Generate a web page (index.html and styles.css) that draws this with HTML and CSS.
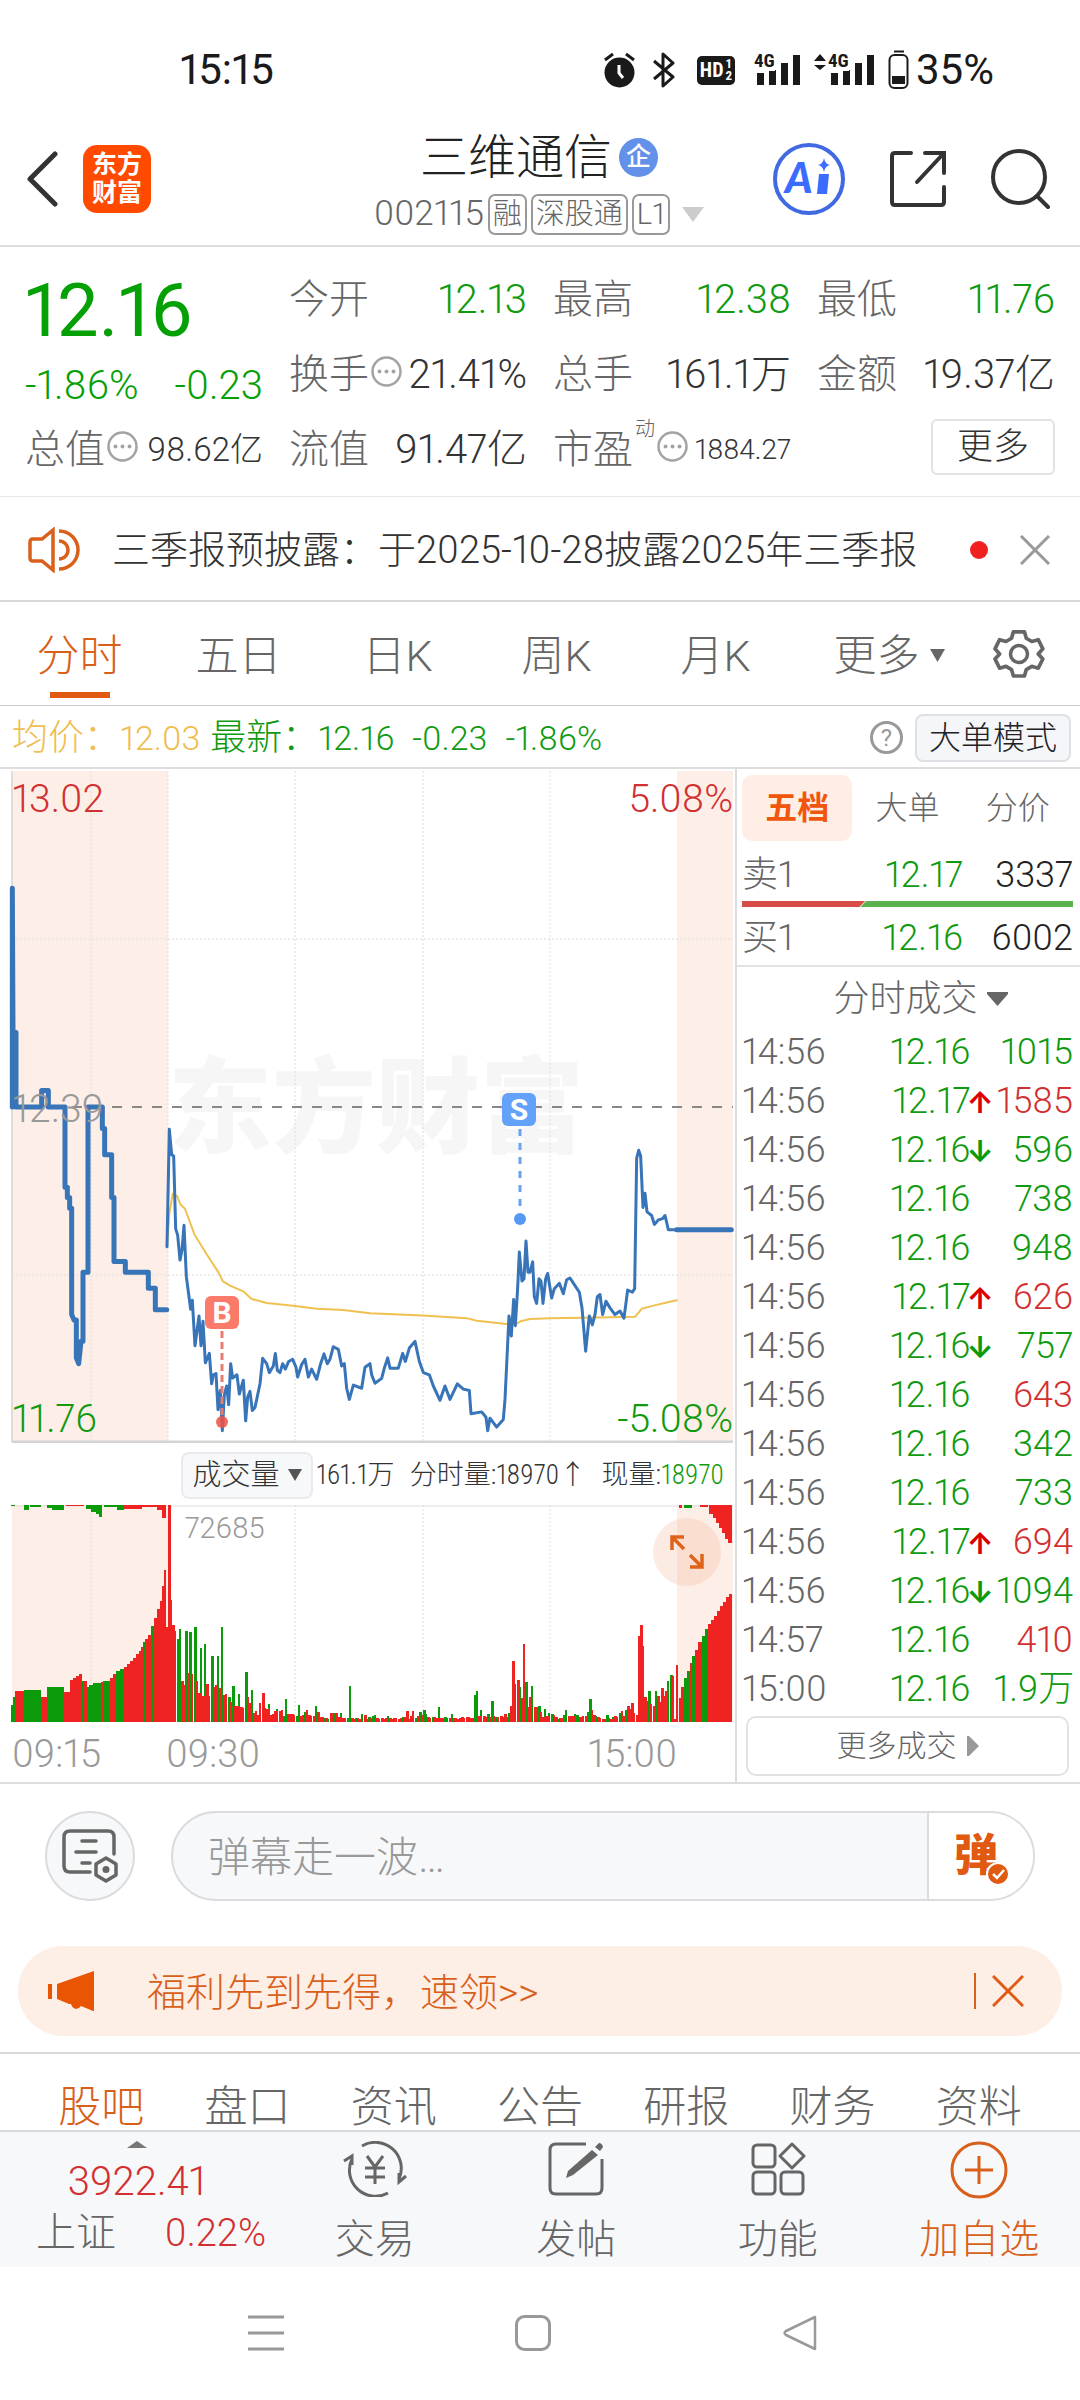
FILE: index.html
```html
<!DOCTYPE html>
<html lang="zh-CN">
<head>
<meta charset="utf-8">
<meta name="viewport" content="width=device-width">
<title>三维通信 002115</title>
<link rel="stylesheet" href="styles.css">
</head>
<body>
<div class="statusbar">
  <span class="clock">15:15</span>
  <div class="status-icons">
    <svg width="31" height="36" viewBox="0 0 31 36"><circle cx="15.500" cy="20.500" r="15" fill="#1a1a1a"/><path d="M1 8l8-6M30 8l-8-6" stroke="#1a1a1a" stroke-width="3"/><path d="M15 13v8l4 5" fill="none" stroke="#fff" stroke-width="3"/></svg>
    <svg class="bt" width="22" height="36" viewBox="0 0 22 36"><path d="M1 9l19 16-10 9V2l10 9L1 27" fill="none" stroke="#1a1a1a" stroke-width="3" stroke-linejoin="round"/></svg>
    <span class="hd">HD<span class="hd-n"><i>1</i><i>2</i></span></span>
    <span class="sig">
      <svg width="47" height="34" viewBox="0 0 47 34"><path d="M3 20h7v12H3zM15 17h7v15h-7zM27 10h7v22h-7zM39 2h7v30h-7z" fill="#1a1a1a"/></svg><b>4G</b>
    </span>
    <svg class="updown" width="12" height="34" viewBox="0 0 12 34"><path d="M0 8l6-7 6 7zM0 12h12l-6 5z" fill="#1a1a1a"/></svg>
    <span class="sig">
      <svg width="47" height="34" viewBox="0 0 47 34"><path d="M3 20h7v12H3zM15 17h7v15h-7zM27 10h7v22h-7zM39 2h7v30h-7z" fill="#1a1a1a"/></svg><b>4G</b>
    </span>
    <svg class="batt" width="22" height="40" viewBox="0 0 22 40"><path d="M6 1.500h10" stroke="#1a1a1a" stroke-width="2"/><rect x="1.500" y="5" width="18" height="33" rx="5" fill="none" stroke="#1a1a1a" stroke-width="2"/><path d="M4 26h13v8H4z" fill="#1a1a1a"/></svg>
    <span class="pct">35%</span>
  </div>
</div>

<header class="header">
  <div class="head-left">
    <button class="icon-btn" aria-label="返回"><svg width="32" height="56" viewBox="0 0 32 56"><path d="M28 3L3 28l25 25" fill="none" stroke="#333" stroke-width="5" stroke-linecap="round" stroke-linejoin="round"/></svg></button>
    <a href="#home" class="logo">东方<br>财富</a>
  </div>
  <div class="title">
    <h1>三维通信<span class="qi">企</span></h1>
    <button class="code-row"><span class="code">002115</span><span class="tag">融</span><span class="tag">深股通</span><span class="tag">L1</span><svg width="22" height="15" viewBox="0 0 22 15"><path d="M0 0h22L11 15z" fill="#ccc"/></svg></button>
  </div>
  <div class="head-right">
    <button class="icon-btn" aria-label="Ai"><svg width="72" height="72" viewBox="0 0 72 72"><circle cx="36" cy="36" r="34" fill="none" stroke="#4169e1" stroke-width="4"/><text x="12" y="50" class="ai">A</text><path d="M46 31h10l-2 20h-10z" fill="#3b6cff"/><path d="M51 15q1 6 6 7-5 1-6 7-1-6-6-7 5-1 6-7z" fill="#3b6cff"/></svg></button>
    <button class="icon-btn" aria-label="分享"><svg width="58" height="58" viewBox="0 0 58 58"><path d="M22 3H6q-3 0-3 3v46q0 3 3 3h46q3 0 3-3V37M36 3h19v20M55 3L28 32" fill="none" stroke="#333" stroke-width="4" stroke-linecap="round"/></svg></button>
    <button class="icon-btn" aria-label="搜索"><svg width="60" height="60" viewBox="0 0 60 60"><circle cx="28" cy="28" r="26" fill="none" stroke="#333" stroke-width="4"/><path d="M46 47l11 11" stroke="#333" stroke-width="4" stroke-linecap="round"/></svg></button>
  </div>
</header>

<section class="quote">
  <div class="last">
    <div class="price">12.16</div>
    <div class="chg"><span>-1.86%</span><span>-0.23</span></div>
  </div>
  <div class="cell"><span>今开</span><b class="g">12.13</b></div>
  <div class="cell"><span>最高</span><b class="g">12.38</b></div>
  <div class="cell"><span>最低</span><b class="g">11.76</b></div>
  <div class="cell"><span>换手<svg width="31" height="31" viewBox="0 0 31 31"><use href="#dots"/></svg></span><b>21.41%</b></div>
  <div class="cell"><span>总手</span><b>161.1万</b></div>
  <div class="cell"><span>金额</span><b>19.37亿</b></div>
  <div class="cell"><span>总值<svg width="31" height="31" viewBox="0 0 31 31"><g id="dots"><circle cx="15.500" cy="15.500" r="14" fill="none" stroke="#a3a3a3" stroke-width="2.500"/><g fill="#a3a3a3"><circle cx="8.500" cy="15.500" r="2"/><circle cx="15.500" cy="15.500" r="2"/><circle cx="22.500" cy="15.500" r="2"/></g></g></svg></span><b class="mid">98.62亿</b></div>
  <div class="cell"><span>流值</span><b>91.47亿</b></div>
  <div class="cell"><span>市盈<sup>动</sup><svg width="31" height="31" viewBox="0 0 31 31"><use href="#dots"/></svg></span><b class="small">1884.27</b></div>
  <div class="cell end"><button class="more-btn">更多</button></div>
</section>

<div class="news">
  <svg width="52" height="46" viewBox="0 0 52 46"><path d="M25 3L14 12H5q-3 0-3 3v16q0 3 3 3h9l11 9zM31 14a9 9 0 0 1 0 18M31 4a19 19 0 0 1 0 38" fill="none" stroke="#d9601a" stroke-width="3.500"/></svg>
  <a href="#news">三季报预披露：于2025-10-28披露2025年三季报</a>
  <i class="dot"></i>
  <button class="icon-btn" aria-label="关闭"><svg width="30" height="30" viewBox="0 0 30 30"><path d="M1 1l28 28M29 1L1 29" stroke="#999" stroke-width="3"/></svg></button>
</div>

<nav class="periods">
  <a href="#m" class="on">分时</a><a href="#5d">五日</a><a href="#dk">日K</a><a href="#wk">周K</a><a href="#mk">月K</a><a href="#more" class="drop">更多<svg width="15" height="13" viewBox="0 0 15 13"><path d="M0 0h15L7.500 13z" fill="#666"/></svg></a>
  <button class="icon-btn" aria-label="设置"><svg width="52" height="52" viewBox="0 0 52 52"><path d="M20 2h12l2 7 6 3.500 7-2 5 10-5 5.500 5 5.500-5 10-7-2-6 3.500-2 7H20l-2-7-6-3.500-7 2-5-10L5 26l-5-5.500 5-10 7 2L18 9z" transform="translate(2 2) scale(.92)" fill="none" stroke="#666" stroke-width="4" stroke-linejoin="round"/><circle cx="26" cy="26" r="8.500" fill="none" stroke="#666" stroke-width="3.500"/></svg></button>
</nav>

<div class="info">
  <span class="avg">均价：<em>12.03</em></span><span class="now">最新：<em>12.16</em><em>-0.23</em><em>-1.86%</em></span>
  <button class="help" aria-label="帮助">?</button>
  <button class="mode">大单模式</button>
</div>

<main class="board">
  <div class="charts">
    <svg class="chart" viewBox="0 0 735 674" role="img" aria-label="分时走势">
      <path d="M12 2h156v672H12zM677 2h56v672h-56z" fill="#fdeee7"/>
      <text x="168" y="376" class="mark">东方财富</text>
      <path d="M91 2v671M168 2v671M295 2v671M423 2v671M550 2v671M12 170h721M12 506h721" stroke="#ddd" stroke-width="1" stroke-dasharray="2 2"/>
      <path d="M12 2v671" stroke="#e0dcd9" stroke-width="2"/>
      <path d="M12 673h721" stroke="#d4d4d4" stroke-width="3"/>
      <path d="M12 338h721" stroke="#888" stroke-width="2" stroke-dasharray="10 10"/>
      <g class="plot" transform="translate(0 -8) scale(.33333 .44643)">
        <polyline class="avg-line" points="501,1085 508,1015 518,970 532,975 540,992 555,1003 583,1060 620,1105 655,1145 668,1165 690,1175 730,1188 755,1205 800,1214 886,1221 950,1227 1030,1230 1110,1237 1268,1242 1400,1248 1430,1254 1520,1261 1545,1262 1562,1255 1590,1250 1650,1248 1750,1247 1905,1245 1925,1227 1960,1220 2000,1213 2030,1208"/>
        <path class="pre" d="M37 775V285L39 608H48V775H125V738H145V775H195V955H202V978H209V1002H215V1240L222 1252H229V1337L236 1350L243 1300H249V1145H264V775H307V823H314V882H335V978H342V1121H376V1145H445V1181H466V1229H500M2030 1050H2194"/>
        <polyline class="line" points="501,1088 508,825 515,882 521,885 527,1048 533,1062 540,1118 546,1095 552,1040 559,1155 572,1228 577,1208 585,1310 597,1243 603,1310 609,1255 616,1348 628,1327 635,1395 640,1375 648,1372 654,1453 661,1410 667,1500 673,1420 680,1400 686,1442 692,1350 698,1382 711,1375 718,1418 730,1387 737,1478 743,1425 750,1412 757,1455 765,1448 780,1395 788,1338 800,1350 808,1370 820,1355 826,1327 832,1365 840,1370 848,1350 856,1362 866,1345 878,1340 888,1358 893,1380 905,1352 915,1340 925,1380 935,1362 950,1385 962,1350 972,1328 982,1350 990,1340 1000,1312 1015,1318 1025,1355 1033,1350 1040,1405 1048,1430 1060,1398 1085,1405 1095,1358 1110,1350 1115,1375 1125,1394 1145,1383 1153,1360 1163,1337 1170,1360 1195,1360 1208,1327 1216,1345 1228,1315 1245,1300 1258,1345 1270,1370 1288,1375 1300,1400 1320,1432 1335,1400 1350,1430 1372,1395 1390,1407 1408,1410 1413,1462 1445,1458 1458,1470 1463,1500 1470,1472 1490,1492 1510,1475 1515,1430 1527,1243 1534,1288 1541,1206 1546,1265 1553,1180 1558,1100 1566,1165 1572,1160 1578,1075 1584,1145 1590,1145 1598,1122 1603,1200 1610,1215 1617,1160 1623,1165 1629,1215 1637,1160 1643,1148 1655,1203 1663,1182 1678,1170 1690,1193 1700,1162 1710,1158 1725,1175 1738,1190 1746,1225 1757,1322 1768,1243 1777,1263 1785,1240 1792,1200 1800,1195 1808,1240 1818,1210 1830,1225 1845,1240 1860,1232 1872,1248 1883,1185 1897,1190 1904,1182 1910,890 1916,872 1922,885 1929,1000 1935,968 1941,1010 1955,1018 1963,1038 1975,1028 1988,1025 1995,1018 2005,1050 2030,1050"/>
      </g>
      <g class="flag"><path d="M222 562v84" stroke="#e87c70" stroke-width="3" stroke-dasharray="7 4"/><circle cx="222" cy="653" r="6" fill="#ef5045" opacity=".85"/><rect x="205" y="527" width="34" height="33" rx="6" fill="#fb7b6b"/><text x="222" y="554">B</text></g>
      <g class="flag"><path d="M520 360v84" stroke="#69a3ee" stroke-width="3" stroke-dasharray="7 7"/><circle cx="520" cy="450" r="6" fill="#5599f7"/><rect x="502" y="324" width="34" height="33" rx="6" fill="#64a1f8"/><text x="519" y="351">S</text></g>
      <text x="12" y="43" class="lbl up">13.02</text>
      <text x="733" y="43" class="lbl up r">5.08%</text>
      <text x="12" y="353" class="lbl base">12.39</text>
      <text x="12" y="663" class="lbl dn">11.76</text>
      <text x="733" y="663" class="lbl dn r">-5.08%</text>
    </svg>
    <div class="vol-head">
      <button class="vol-btn">成交量<svg width="14" height="12" viewBox="0 0 14 12"><path d="M0 0h14L7 12z" fill="#555"/></svg></button>
      <span>161.1万</span><span>分时量:18970↑</span><span>现量:<b>18970</b></span>
    </div>
    <div class="vol-wrap">
      <svg class="chart" viewBox="0 0 735 217" role="img" aria-label="成交量">
        <path d="M12 0h156v217H12zM677 0h56v217h-56z" fill="#fdeee7"/>
        <path d="M91 0v217M295 0v217M423 0v217M550 0v217" stroke="#ddd" stroke-width="1" stroke-dasharray="2 2"/>
        <path d="M11 1h722" stroke="#ddd" stroke-width="1"/>
        <path id="volDown" fill="#0a9a0a"/><path id="volUp" fill="#ef2422"/>
        <text x="185" y="33" class="vmax">72685</text>
      </svg>
      <button class="expand" aria-label="全屏"><svg width="34" height="34" viewBox="0 0 34 34"><path d="M14 2H2v13M3 3l11 11M20 20l11 11M20 32h12V19" fill="none" stroke="#e0631a" stroke-width="3.500"/></svg></button>
    </div>
    <div class="axis"><span>09:15</span><span>09:30</span><span class="close">15:00</span></div>
  </div>

  <aside class="orders">
    <nav class="otabs"><button class="on">五档</button><button>大单</button><button>分价</button></nav>
    <div class="book"><span>卖1</span><b class="g">12.17</b><b>3337</b></div>
    <svg class="ratio" viewBox="0 0 333 6" preserveAspectRatio="none"><path d="M0 0h124l-6 6H0z" fill="#d84c47"/><path d="M125 0h208v6H119z" fill="#5cb24d"/></svg>
    <div class="book buy"><span>买1</span><b class="g">12.16</b><b>6002</b></div>
    <button class="deal-head">分时成交<svg width="21" height="14" viewBox="0 0 21 14"><path d="M0 0h21v2L10.500 14 0 2z" fill="#666"/></svg></button>
    <table class="deals"><tbody>
      <tr><td>14:56</td><td>12.16</td><td></td><td>1015</td></tr>
      <tr><td>14:56</td><td>12.17</td><td class="a-up"></td><td class="up">1585</td></tr>
      <tr><td>14:56</td><td>12.16</td><td class="a-dn"></td><td>596</td></tr>
      <tr><td>14:56</td><td>12.16</td><td></td><td>738</td></tr>
      <tr><td>14:56</td><td>12.16</td><td></td><td>948</td></tr>
      <tr><td>14:56</td><td>12.17</td><td class="a-up"></td><td class="up">626</td></tr>
      <tr><td>14:56</td><td>12.16</td><td class="a-dn"></td><td>757</td></tr>
      <tr><td>14:56</td><td>12.16</td><td></td><td class="up">643</td></tr>
      <tr><td>14:56</td><td>12.16</td><td></td><td>342</td></tr>
      <tr><td>14:56</td><td>12.16</td><td></td><td>733</td></tr>
      <tr><td>14:56</td><td>12.17</td><td class="a-up"></td><td class="up">694</td></tr>
      <tr><td>14:56</td><td>12.16</td><td class="a-dn"></td><td>1094</td></tr>
      <tr><td>14:57</td><td>12.16</td><td></td><td class="up">410</td></tr>
      <tr><td>15:00</td><td>12.16</td><td></td><td>1.9万</td></tr>
    </tbody></table>
    <button class="more-deals">更多成交<svg width="12" height="20" viewBox="0 0 12 20"><path d="M0 0h2l10 10L2 20H0z" fill="#999"/></svg></button>
  </aside>
</main>

<div class="barrage">
  <button class="round" aria-label="弹幕设置"><svg width="58" height="58" viewBox="0 0 58 58"><path d="M53 27V10q0-6-6-6H9q-6 0-6 6v29q0 6 6 6h20M21 14h14M15 25h20M21 36h8" fill="none" stroke="#666" stroke-width="3.500" stroke-linecap="round"/><path d="M45 31l10 6v11l-10 6-10-6V37z" fill="none" stroke="#666" stroke-width="3.500" stroke-linejoin="round"/><circle cx="45" cy="42.500" r="3.500" fill="#666"/></svg></button>
  <div class="field">
    <input type="text" placeholder="弹幕走一波…" aria-label="弹幕">
    <button aria-label="弹幕开关"><span>弹</span><svg width="24" height="24" viewBox="0 0 24 24"><circle cx="12" cy="12" r="11" fill="#e05a12" stroke="#fff" stroke-width="2"/><path d="M7 12l4 4 7-8" fill="none" stroke="#fff" stroke-width="2.500"/></svg></button>
  </div>
</div>

<div class="banner">
  <svg width="46" height="40" viewBox="0 0 46 40"><path d="M0 13h4v15H0zM9 13l37-13v40H45l-12-5q-2 3-5 3-4-1-5-5h-2l-12-5z" fill="#ea5504"/></svg>
  <a href="#welfare">福利先到先得，速领&gt;&gt;</a>
  <i></i>
  <button class="icon-btn" aria-label="关闭"><svg width="32" height="32" viewBox="0 0 32 32"><path d="M1 1l30 30M31 1L1 31" stroke="#e05a12" stroke-width="3"/></svg></button>
</div>

<nav class="sections"><a href="#guba" class="on">股吧</a><a href="#pan">盘口</a><a href="#zixun">资讯</a><a href="#gonggao">公告</a><a href="#yanbao">研报</a><a href="#caiwu">财务</a><a href="#ziliao">资料</a></nav>

<footer class="toolbar">
  <a href="#index" class="index"><svg width="20" height="7" viewBox="0 0 20 7"><path d="M10 0l10 7H0z" fill="#777"/></svg><strong>3922.41</strong><span>上证<em>0.22%</em></span></a>
  <a href="#trade"><svg width="64" height="56" viewBox="0 0 64 56"><path d="M19 5A26 26 0 0 1 56 38M45 52A26 26 0 0 1 9 18M1 20L9 15v9M63 35l-7 6v-9M24 15l8 11 8-11M22 27h20M22 36h20M32 26v17" fill="none" stroke="#666" stroke-width="3"/></svg>交易</a>
  <a href="#post"><svg width="56" height="56" viewBox="0 0 56 56"><path d="M38 3H8q-6 0-6 6v38q0 6 6 6h40q6 0 6-6V18" fill="none" stroke="#666" stroke-width="3"/><path d="M44 9l6 5-25 20-7 3 2-7zM47 6l4-4q3 0 4 4l-3 4z" fill="#666"/></svg>发帖</a>
  <a href="#func"><svg width="56" height="56" viewBox="0 0 56 56"><g fill="none" stroke="#666" stroke-width="3"><rect x="3" y="4" width="22" height="22" rx="4"/><rect x="3" y="31" width="22" height="22" rx="4"/><rect x="31" y="31" width="22" height="22" rx="4"/><path d="M42 3l12 12-12 12-12-12z" stroke-linejoin="round"/></g></svg>功能</a>
  <a href="#add" class="on"><svg width="58" height="58" viewBox="0 0 58 58"><circle cx="29" cy="29" r="27" fill="none" stroke="#d9601a" stroke-width="3"/><path d="M29 15v28M15 29h28" stroke="#d9601a" stroke-width="3"/></svg>加自选</a>
</footer>

<div class="sysnav">
  <svg width="36" height="36" viewBox="0 0 36 36"><path d="M0 2h36M0 18h36M0 34h36" stroke="#999" stroke-width="3"/></svg>
  <svg width="36" height="36" viewBox="0 0 36 36"><rect x="1.500" y="1.500" width="33" height="33" rx="8" fill="none" stroke="#999" stroke-width="3"/></svg>
  <svg width="36" height="36" viewBox="0 0 36 36"><path d="M33 2v32L4 20q-3-2 0-4z" fill="none" stroke="#999" stroke-width="2.500" stroke-linejoin="round"/></svg>
</div>
<script src="chart.js"></script>
</body>
</html>
```
FILE: styles.css
```css
* { box-sizing: border-box; }
body {
  margin: 0;
  background: #fff;
  color: #333;
  font-family: Roboto, "Noto Sans CJK SC", sans-serif;
  font-size: 40px;
  font-weight: 300;
  line-height: 50px;
  font-variant-numeric: proportional-nums;
}
button, input { font: inherit; color: inherit; background: none; border: 0; padding: 0; margin: 0; font-variant-numeric: inherit; }
a { color: inherit; text-decoration: none; }
b, strong, h1 { font-weight: inherit; margin: 0; }
em, i { font-style: normal; }
svg { display: block; flex: none; }
.g { color: #109a10; }
.icon-btn { display: block; flex: none; }

.statusbar { display: flex; justify-content: space-between; align-items: center; height: 96px; padding: 44px 86px 0 180px; color: #1a1a1a; }
.clock { font-size: 42px; font-weight: 400; }
.status-icons { display: flex; align-items: center; }
.bt { margin: 0 22px 0 18px; }
.hd { display: flex; align-items: center; height: 29px; padding: 0 3px; margin-right: 19px; border-radius: 5px; background: #1a1a1a; color: #fff; font: 700 20px/29px "Roboto Condensed", Roboto, sans-serif; }
.hd-n { font-size: 13px; line-height: 12px; margin-left: 2px; }
.hd-n i { display: block; }
.sig { position: relative; margin-right: 13px; }
.updown { margin-right: 2px; }
.batt { margin-right: 6px; }
.sig b { position: absolute; left: 0; top: -2px; font: 700 19px/20px "Roboto Condensed", Roboto, sans-serif; background: #fff; }
.pct { font-size: 42px; font-weight: 400; }

.header { display: grid; grid-template-columns: 1fr auto 1fr; align-items: center; height: 151px; padding: 16px 29px 0 27px; border-bottom: 2px solid #ddd; }
.head-left, .head-right { display: flex; align-items: center; }
.head-left { gap: 24px; }
.head-right { justify-content: flex-end; gap: 44px; }
.logo { display: block; width: 68px; height: 68px; padding-top: 6px; border-radius: 14px; background: #ff4a00; color: #fff; font-size: 25px; font-weight: 700; line-height: 28px; text-align: center; }
.title { display: flex; flex-direction: column; align-items: center; gap: 8px; padding-top: 7px; }
.title h1 { display: flex; align-items: center; gap: 7px; font-size: 48px; line-height: 56px; color: #222; }
.qi { width: 39px; height: 39px; border-radius: 50%; background: #6390e8; color: #fff; font-size: 25px; font-weight: 500; line-height: 38px; text-align: center; }
.code-row { display: flex; align-items: center; gap: 4px; height: 41px; color: #666; }
.code { font-size: 35px; }
.tag { height: 41px; padding: 0 3px; border: 2px solid #999; border-radius: 7px; font-size: 29px; line-height: 37px; }
.code-row svg { margin-left: 8px; }
.ai { font: italic 900 42px Lato, sans-serif; fill: #3b6cff; }

.quote { display: grid; grid-template-columns: repeat(4, 1fr); grid-auto-rows: 75px; column-gap: 26px; height: 250px; padding: 15px 25px 0; border-bottom: 1px solid #e8e8e8; }
.last { grid-row: span 2; color: #05a005; }
.price { font-size: 74px; font-weight: 400; line-height: 98px; }
.chg { display: flex; justify-content: space-between; line-height: 52px; }
.cell { display: flex; justify-content: space-between; align-items: center; white-space: nowrap; }
.cell > span { display: flex; align-items: center; gap: 2px; color: #666; }
.cell svg { margin-bottom: 6px; }
.cell sup { font-size: 20px; line-height: 24px; align-self: flex-start; margin-top: -8px; }
.cell .mid { font-size: 33px; }
.cell .small { font-size: 28px; }
.cell.end { justify-content: flex-end; }
.more-btn { width: 124px; height: 56px; margin-bottom: 6px; border: 2px solid #e2e2e2; border-radius: 6px; font-size: 36px; }

.news { display: flex; align-items: center; height: 105px; padding: 2px 30px 0 28px; border-bottom: 2px solid #d8d8d8; }
.news a { flex: 1; padding-left: 32px; font-size: 38px; white-space: nowrap; }
.dot { width: 18px; height: 18px; margin-right: 32px; border-radius: 50%; background: #f02020; }

.periods { display: grid; grid-template-columns: repeat(5, 159px) 1fr auto; align-items: center; height: 104px; padding-right: 35px; border-bottom: 1px solid #ccc; color: #666; font-size: 43px; }
.periods a { display: flex; justify-content: center; align-items: center; gap: 10px; height: 103px; padding-top: 4px; }
.periods .drop { padding-right: 10px; }
.periods .on { color: #d9601a; background: linear-gradient(#e05a12, #e05a12) 50% 90px / 60px 6px no-repeat; }

.info { display: flex; align-items: center; height: 63px; padding: 2px 9px 0 12px; border-bottom: 2px solid #ddd; font-size: 36px; white-space: nowrap; }
.avg { color: #f0bd50; }
.info em { font-size: 34px; }
.now { flex: 1; display: flex; gap: 18px; padding-left: 10px; color: #109a10; }
.now em:first-child { margin-left: -18px; }
.help { width: 33px; height: 33px; margin-right: 12px; border: 3px solid #999; border-radius: 50%; color: #999; font-size: 24px; font-weight: 400; line-height: 26px; }
.mode { width: 156px; height: 48px; border: 2px solid #dde0e4; border-radius: 8px; background: #f5f6f9; color: #222; font-size: 32px; line-height: 44px; }

.board { display: grid; grid-template-columns: 735fr 345fr; border-bottom: 2px solid #ddd; }
.charts { min-width: 0; }
.chart { width: 100%; height: auto; }
.mark { font: 900 104px "Noto Sans CJK SC", sans-serif; fill: #f6f6f6; }
.plot polyline, .plot path { fill: none; vector-effect: non-scaling-stroke; stroke-linejoin: round; stroke-linecap: round; }
.plot .avg-line { stroke: #f0c050; stroke-width: 2; }
.plot .pre { stroke: #3774b8; stroke-width: 5; }
.plot .line { stroke: #3774b8; stroke-width: 3; }
.lbl { font-size: 39px; }
.lbl.r { text-anchor: end; }
.lbl.up { fill: #d23030; }
.lbl.dn { fill: #109a10; }
.lbl.base { fill: #999; }
.flag text { font: 700 30px Roboto, sans-serif; fill: #fff; text-anchor: middle; }
.vol-head { display: flex; align-items: center; justify-content: space-between; height: 62px; padding: 2px 11px 0 181px; font-family: "Roboto Condensed", "Noto Sans CJK SC", sans-serif; font-size: 27px; white-space: nowrap; }
.vol-head b { color: #109a10; }
.vol-btn { display: flex; align-items: center; justify-content: center; gap: 8px; width: 132px; height: 47px; margin-right: -12px; border: 2px solid #e8eaee; border-radius: 8px; background: #f7f8fa; font-size: 29px; }
.vol-wrap { position: relative; }
.vmax { font-size: 29px; fill: #999; }
.expand { position: absolute; right: 14px; top: 13px; width: 68px; height: 68px; padding: 17px; border-radius: 50%; background: rgba(246, 190, 160, .3); }
.axis { display: flex; height: 60px; padding: 7px 58px 0 12px; color: #999; font-size: 38px; }
.axis span { width: 154px; }
.axis .close { margin-left: auto; width: auto; }

.orders { display: flex; flex-direction: column; padding: 6px 7px 6px 5px; border-left: 2px solid #ddd; font-size: 36px; }
.otabs { display: grid; grid-template-columns: repeat(3, 1fr); color: #666; font-size: 32px; line-height: 66px; }
.otabs .on { border-radius: 10px; background: #feeee6; color: #f0570c; font-weight: 700; }
.book { display: grid; grid-template-columns: 1fr auto 110px; align-items: center; height: 60px; padding-top: 8px; color: #666; }
.book b:last-child { color: #222; text-align: right; }
.book.buy { margin: 0 -7px 0 -5px; padding: 4px 7px 0 5px; border-bottom: 2px solid #e2e2e2; }
.ratio { width: 100%; height: 6px; }
.deal-head { display: flex; align-items: center; justify-content: center; gap: 9px; height: 61px; padding: 2px 0 0 26px; color: #666; }
.deals { flex: 1; width: 100%; border-collapse: collapse; color: #109a10; table-layout: fixed; }
.deals td { height: 49px; padding: 0; line-height: 49px; text-align: right; white-space: nowrap; }
.deals td:first-child { width: 26%; text-align: left; color: #666; }
.deals td:nth-child(2) { width: 43%; }
.deals td:nth-child(3) { width: 7%; }
.deals .up { color: #d23030; }
.a-up::before, .a-dn::before { content: "↑"; display: block; color: #d00; font: 700 30px/44px Inter, sans-serif; text-indent: -4px; text-align: left; }
.a-dn::before { content: "↓"; color: #0a9a0a; }
.more-deals { display: flex; align-items: center; justify-content: center; gap: 10px; height: 60px; margin: 2px 4px 0; border: 2px solid #e2e2e2; border-radius: 10px; color: #666; font-size: 30px; }

.barrage { display: flex; gap: 36px; padding: 27px 45px 0; }
.round { display: flex; align-items: center; justify-content: center; width: 90px; height: 90px; border: 2px solid #dadcdf; border-radius: 50%; background: #f7f8fa; }
.field { flex: 1; display: flex; height: 90px; border: 2px solid #dadcdf; border-radius: 45px; overflow: hidden; background: #f7f8fa; }
.field input { flex: 1; min-width: 0; padding: 4px 0 0 35px; font-size: 42px; }
.field input::placeholder { color: #999; opacity: 1; }
.field button { position: relative; width: 106px; border-left: 2px solid #dadcdf; background: #fff; color: #e05a12; font-size: 44px; font-weight: 900; text-align: left; padding-left: 25px; }
.field button svg { position: absolute; left: 57px; top: 49px; }

.banner { display: flex; align-items: center; height: 90px; margin: 45px 18px 16px; padding: 0 38px 0 30px; border-radius: 45px; background: #fdeee6; color: #d9601a; }
.banner a { flex: 1; padding: 3px 0 0 53px; font-size: 39px; }
.banner i { width: 2px; height: 36px; margin-right: 16px; background: #d9601a; }

.sections { display: grid; grid-template-columns: repeat(7, 1fr); height: 80px; padding: 28px 28px 0; border-top: 2px solid #d8d8d8; border-bottom: 2px solid #d8dadd; color: #666; font-size: 43px; text-align: center; }
.sections .on { color: #d9601a; }

.toolbar { display: grid; grid-template-columns: 274px repeat(4, 1fr); height: 135px; background: #f7f8fa; color: #666; }
.toolbar a { display: flex; flex-direction: column; align-items: center; justify-content: space-between; padding: 9px 0 2px; line-height: 50px; }
.toolbar .on { color: #d9601a; }
.toolbar .index { justify-content: flex-start; padding-bottom: 0; }
.toolbar strong { color: #d23030; line-height: 68px; }
.index span { display: flex; justify-content: space-between; width: 230px; margin-left: 28px; line-height: 34px; }
.index em { color: #d23030; font-size: 38px; }

.sysnav { display: flex; align-items: center; justify-content: space-between; height: 132px; padding: 0 262px 0 248px; }
```
FILE: chart.js
```js
// One bar per minute from 09:30: height in px, "g" marks a falling minute.
const minutes = ("217 122g 97 91g 83g 93g 41 37 91g 49 90g 48 95g 41 29 74g 26 78g 38 26 66g 35 37 66g 34 95g 27 28 25g 20 36g 16 16 28g 15 14 50g 25 19 32g " +
  "9 11 7 19 29 14g 13 18g 7 8 11 13g 11 12 6g 23g 8 8 8 7 6g 17g 6 7 10g 12 7 6 6 16g 10 5 5 4g 4 3g 9 9 9g 9 5 9g 4 4 4g 36g 4 3 4g 4 " +
  "3 8g 7 3 5g 4 6g 7g 4 3 4 3 4 6g 4 3 4 4 3 4 5g 5 11 3 6 11 4g 6 10g 7 12g 8g 5 4 5g 5 4 15g 4 4 5g 4g 4 8g 4 4 " +
  "3 4 5 4 5 5g 4 4 27g 31g 6 12g 6 5 8g 5 21g 6 5g 5 6 5 8 5 9g 16 61 38g 42 35g 24 78 40g 15 25 36g 15 15 16g 10 " +
  "5 13g 6 9g 8g 7 5 3g 4 4 7g 12g 6 6 6 8g 7g 5g 5 6 6 10g 23g 12 7 6g 5 4 3 3 7g 4g 3 5g 6 5 9g 11 6 12g 16 13 19 9 " +
  "7 86 97 76g 25 21g 31g 18 16 31g 26 20 34 26 31 41g 47g 46 3").split(" ");

// Call auctions: x from, x to, height, falling.
const pre = [
  [11, 13, 17, 1], [13, 15, 25, 1], [15, 24, 31, 0], [24, 41, 32, 1], [41, 47, 25, 0], [47, 64, 35, 1], [64, 70, 30, 0],
  [70, 73, 42, 0], [73, 76, 44, 0], [76, 79, 46, 0], [79, 82, 48, 0], [82, 84, 41, 1], [84, 87, 41, 0], [87, 89, 35, 1], [89, 93, 37, 1],
  [93, 101, 39, 1], [101, 103, 40, 0], [103, 110, 41, 1], [110, 113, 44, 0], [113, 116, 48, 0], [116, 120, 51, 1], [120, 124, 53, 1],
  [124, 127, 55, 0], [127, 130, 58, 0], [130, 133, 61, 0], [133, 136, 64, 0], [136, 139, 68, 0], [139, 141, 71, 0],
  [141, 143, 75, 0], [143, 145, 80, 1], [145, 148, 83, 0], [148, 151, 87, 0], [151, 154, 96, 1], [154, 157, 104, 0],
  [157, 160, 113, 0], [160, 162, 121, 0], [162, 164, 136, 0], [164, 166, 152, 0], [166, 168, 95, 0],
  [676, 678, 57, 0], [679, 681, 24, 0], [681, 684, 35, 0], [684, 687, 44, 1], [687, 690, 51, 1], [690, 692, 59, 0], [692, 695, 66, 1],
  [695, 698, 72, 0], [698, 702, 80, 0], [702, 705, 86, 1], [705, 708, 93, 1], [708, 711, 98, 0], [711, 714, 102, 0],
  [714, 717, 106, 0], [717, 720, 111, 0], [720, 723, 116, 0], [723, 726, 120, 0], [726, 729, 125, 0], [729, 732, 128, 0]
];
const unmatched = [
  [11, 15, 1, 1], [24, 29, 5, 1], [30, 41, 2, 1], [47, 52, 3, 1], [52, 64, 5, 1], [66, 84, 1, 0], [86, 91, 4, 1], [91, 96, 7, 1], [96, 99, 9, 1], [99, 102, 12, 1],
  [104, 117, 2, 1], [117, 124, 5, 1], [124, 142, 4, 0], [142, 157, 2, 0], [157, 162, 5, 0], [162, 166, 13, 0],
  [679, 682, 3, 0], [684, 692, 3, 1], [700, 708, 2, 0], [709, 713, 9, 0], [713, 716, 13, 0], [716, 719, 18, 0], [719, 722, 23, 0],
  [722, 725, 28, 0], [725, 728, 34, 0], [728, 732, 38, 0]
];
const paths = ["", ""];
const bar = (x1, x2, y1, y2, g) => { paths[g] += `M${x1} ${y1}H${x2}V${y2}H${x1}z`; };
minutes.forEach((m, i) => {
  const scale = 508 / minutes.length;
  const x = 168 + Math.round(i * scale);
  bar(x, x + (i % 2 ? 2 : 3), 217 - parseInt(m, 10), 217, m.endsWith("g") ? 1 : 0);
});
pre.forEach(([a, b, h, g]) => bar(a, b, 217 - h, 217, g));
unmatched.forEach(([a, b, h, g]) => bar(a, b, 0, h, g));
document.getElementById("volUp").setAttribute("d", paths[0]);
document.getElementById("volDown").setAttribute("d", paths[1]);
```
